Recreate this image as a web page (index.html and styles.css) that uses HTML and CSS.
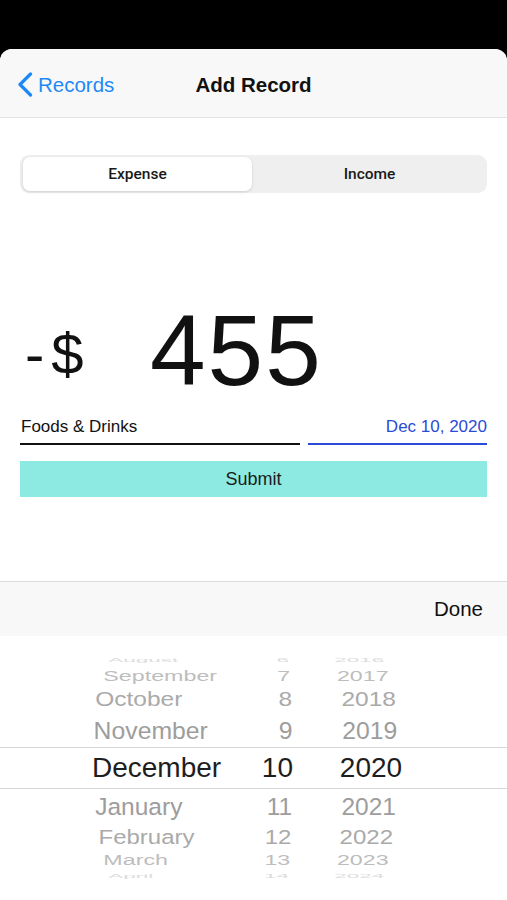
FILE: index.html
```html
<!DOCTYPE html>
<html lang="en">
<head>
  <meta charset="UTF-8">
  <meta name="viewport" content="width=device-width, initial-scale=1.0">
  <title>Add Record</title>
  <link rel="stylesheet" href="styles.css">
</head>
<body>

<div class="sheet">
  <header class="nav">
    <a class="nav-back" href="#">
      <svg class="nav-chevron" width="16" height="25" viewBox="0 0 16 25">
        <path d="M13.5 2 L3 12.5 L13.5 23" fill="none" stroke="currentColor" stroke-width="3.2" stroke-linecap="round" stroke-linejoin="round"/>
      </svg>
      <span>Records</span>
    </a>
    <h1 class="nav-title">Add Record</h1>
    <span></span>
  </header>

  <form class="record-form" id="recordForm">
    <div class="segment">
      <button class="segment-item active" type="button">Expense</button>
      <button class="segment-item" type="button">Income</button>
    </div>

    <div class="amount">
      <span class="amount-sign">-$</span>
      <span class="amount-value">455</span>
    </div>

    <div class="fields">
      <div class="field field-category">Foods &amp; Drinks</div>
      <div class="field field-date">Dec 10, 2020</div>
    </div>

    <button class="submit-button" type="button">Submit</button>
  </form>

  <div class="keyboard">
    <div class="toolbar">
      <span class="toolbar-done">Done</span>
    </div>
    <div class="picker">
      <div class="wheel">
        <div class="wheel-row above-3"><span class="wheel-month">August</span><span class="wheel-day">6</span><span class="wheel-year">2016</span></div>
        <div class="wheel-row above-2"><span class="wheel-month">September</span><span class="wheel-day">7</span><span class="wheel-year">2017</span></div>
        <div class="wheel-row above-1"><span class="wheel-month">October</span><span class="wheel-day">8</span><span class="wheel-year">2018</span></div>
        <div class="wheel-row above-0"><span class="wheel-month">November</span><span class="wheel-day">9</span><span class="wheel-year">2019</span></div>
        <div class="wheel-row current"><span class="wheel-month">December</span><span class="wheel-day">10</span><span class="wheel-year">2020</span></div>
        <div class="wheel-row below-1"><span class="wheel-month">January</span><span class="wheel-day">11</span><span class="wheel-year">2021</span></div>
        <div class="wheel-row below-2"><span class="wheel-month">February</span><span class="wheel-day">12</span><span class="wheel-year">2022</span></div>
        <div class="wheel-row below-3"><span class="wheel-month">March</span><span class="wheel-day">13</span><span class="wheel-year">2023</span></div>
        <div class="wheel-row below-4"><span class="wheel-month">April</span><span class="wheel-day">14</span><span class="wheel-year">2024</span></div>
      </div>
    </div>
  </div>
</div>

</body>
</html>
```

FILE: styles.css
```css
body { margin: 0; background: #000; font-family: "Liberation Sans", Arial, sans-serif; color: #111; }

.sheet {
  margin-top: 49px; height: 851px; background: #fff;
  border-radius: 12px 12px 0 0; overflow: hidden;
  display: flex; flex-direction: column;
}

/* nav bar */
.nav {
  height: 69px; padding-top: 3px; box-sizing: border-box; flex-shrink: 0;
  background: #f8f8f8; border-bottom: 1px solid #e2e2e2;
  display: grid; grid-template-columns: 1fr auto 1fr; align-items: center;
}
.nav-back {
  display: flex; align-items: center; gap: 5px;
  padding-left: 17px; color: #1e88f6; text-decoration: none; font-size: 20.5px;
}
.nav-chevron { display: block; }
.nav-title { margin: 0; font-size: 20.5px; font-weight: bold; color: #111; }

/* form */
.record-form { padding: 0 20px; }

.segment {
  margin-top: 37px; height: 38px; box-sizing: border-box; padding: 2px 3px;
  background: #efeff0; border-radius: 9px;
  display: grid; grid-template-columns: 1fr 1fr; gap: 3px;
}
.segment-item {
  border: none; background: transparent; border-radius: 7px; padding: 0;
  font-family: Roboto, "Liberation Sans", sans-serif; font-size: 15.5px; font-weight: 500; color: #1a1a1a;
}
.segment-item.active { background: #fff; box-shadow: 0 1px 3px rgba(0,0,0,.14); }

.amount {
  margin-top: 107px; height: 100px; padding-left: 5px;
  display: flex; align-items: flex-end;
}
.amount-sign {
  width: 125px; font-size: 58px; line-height: 1; letter-spacing: 7px; padding-bottom: 17px;
}
.amount-value { font-size: 100px; line-height: 1; letter-spacing: 2px; }

.fields {
  margin-top: 17px;
  display: grid; grid-template-columns: 280px 179px; gap: 8px;
}
.field {
  font-size: 17px; line-height: 20px; padding-bottom: 6px;
  border-bottom: 2px solid #111;
}
.field-category { padding-left: 1px; }
.field-date { text-align: right; color: #2a4bd7; border-bottom-color: #2a4bd7; }

.submit-button {
  display: block; width: 100%; height: 36px; margin-top: 16px;
  background: #8ceae2; border: none; font-family: inherit; font-size: 18px; color: #1a1a1a;
}

/* date picker keyboard */
.keyboard { margin-top: auto; flex-shrink: 0; }
.toolbar {
  height: 55px; box-sizing: border-box; border-top: 1px solid #dcdcdc; background: #f8f8f8;
  display: flex; justify-content: flex-end; align-items: center; padding-right: 24px;
}
.toolbar-done { font-size: 20.5px; color: #111; }

.picker { height: 264px; box-sizing: border-box; padding-top: 17px; background: #fff; }

.wheel-row {
  display: flex; align-items: center; box-sizing: border-box;
  padding-left: 92px; font-size: 25px; color: #9d9d9d;
  transform-origin: 254px 50%;
}
.wheel-month { width: 150px; }
.wheel-day { width: 51px; text-align: right; }
.wheel-year { width: 82px; margin-left: 37px; text-align: center; }

.above-3 { height: 14px; line-height: 14px; transform: scale(.9, .22); color: #dcdcdc; }
.above-2 { height: 18px; line-height: 18px; transform: scale(.93, .56); color: #bdbdbd; }
.above-1 { height: 29px; line-height: 29px; transform: scale(.98, .8); color: #aaa; }
.above-0 { height: 33px; line-height: 33px; transform: scale(.99, .98); }
.current {
  height: 42px; line-height: 40px; font-size: 28px; color: #1e1e1e;
  border-top: 1px solid #d8d8d8; border-bottom: 1px solid #d8d8d8;
}
.below-1 { height: 34px; line-height: 34px; transform: scale(.98, .98); }
.below-2 { height: 28px; line-height: 28px; transform: scale(.96, .83); color: #aaa; }
.below-3 { height: 18px; line-height: 18px; transform: scale(.93, .6); color: #bdbdbd; }
.below-4 { height: 14px; line-height: 14px; transform: scale(.9, .22); color: #dcdcdc; }
```
